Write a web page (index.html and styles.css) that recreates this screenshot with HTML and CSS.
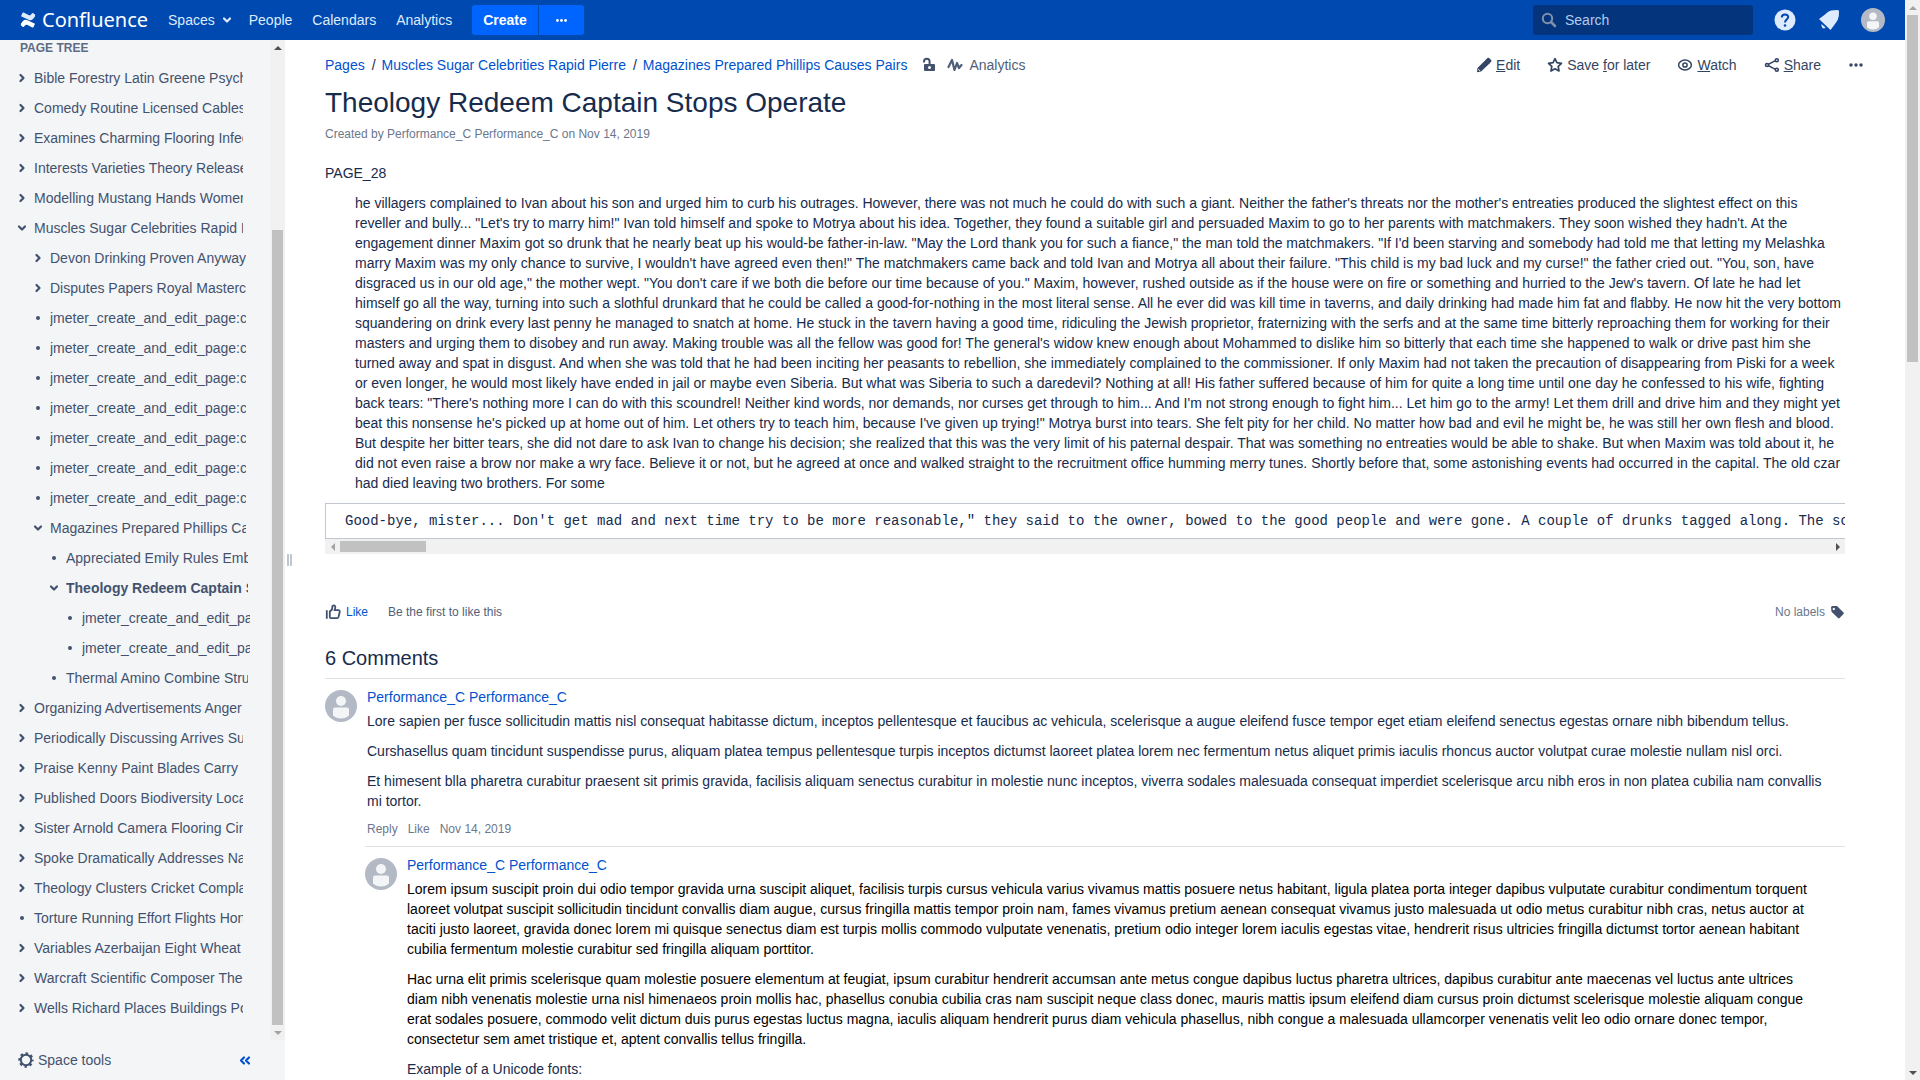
FILE: index.html
```html
<!DOCTYPE html>
<html lang="en">
<head>
<meta charset="utf-8">
<title>Theology Redeem Captain Stops Operate - Confluence</title>
<link rel="stylesheet" href="styles.css">
</head>
<body>
<svg class="sprite" aria-hidden="true">
  <symbol id="chev-right" viewBox="0 0 12 12"><path d="M4.500 3l3 3-3 3" fill="none" stroke="currentColor" stroke-width="2.200" stroke-linecap="round" stroke-linejoin="round"/></symbol>
  <symbol id="chev-down" viewBox="0 0 12 12"><path d="M3 4.500l3 3 3-3" fill="none" stroke="currentColor" stroke-width="2.200" stroke-linecap="round" stroke-linejoin="round"/></symbol>
  <symbol id="dot" viewBox="0 0 12 12"><circle cx="6" cy="6" r="2" fill="currentColor"/></symbol>
  <symbol id="more" viewBox="0 0 16 16"><circle cx="3" cy="8" r="1.700" fill="currentColor"/><circle cx="8" cy="8" r="1.700" fill="currentColor"/><circle cx="13" cy="8" r="1.700" fill="currentColor"/></symbol>
  <symbol id="avatar" viewBox="0 0 32 32"><circle cx="16" cy="16" r="16" fill="#b3bac5"/><circle cx="16" cy="11" r="5" fill="#f4f5f7"/><path d="M8 19.500q0-2 2-2h12q2 0 2 2v6q-3 3-8 3t-8-3z" fill="#f4f5f7"/></symbol>
</svg>
<div class="window">
  <div class="app">
    <header class="topbar">
      <a class="logo" href="#">
        <svg width="16" height="16" viewBox="0 0 16 16"><path d="M1 11.500l2-2.600q2-2 4.500-.700l7.500 3.600-1.600 3.400q-.3.600-1 .3L7.500 13q-1.600-.8-2.600.6L4 14.800q-.4.500-1 .2L.8 13.200z" fill="#fff"/><path d="M15 4.500l-2 2.600q-2 2-4.500.7L1 4.200 2.600.8q.3-.6 1-.3L8.500 3q1.600.8 2.600-.6L12 1.200q.4-.5 1-.2l2.200 1.800z" fill="#deebff"/></svg>
        <span>Confluence</span>
      </a>
      <nav class="mainnav">
        <a class="spaces" href="#">Spaces <svg width="12" height="12"><use href="#chev-down"/></svg></a>
        <a href="#">People</a>
        <a href="#">Calendars</a>
        <a href="#">Analytics</a>
      </nav>
      <div class="create">
        <button type="button">Create</button>
        <button type="button" aria-label="Create from template"><svg width="13" height="13"><use href="#more"/></svg></button>
      </div>
      <div class="tools">
        <label class="search">
          <svg width="16" height="16" viewBox="0 0 16 16"><circle cx="6.500" cy="6.500" r="4.700" fill="none" stroke="currentColor" stroke-width="2"/><path d="M10 10l4 4" stroke="currentColor" stroke-width="2.500" stroke-linecap="round"/></svg>
          <input type="text" placeholder="Search" aria-label="Search">
        </label>
        <a href="#" aria-label="Help"><svg width="24" height="24" viewBox="0 0 24 24"><circle cx="12" cy="12" r="10.500" fill="#deebff"/><path d="M8.800 9.500c0-4 6.400-4 6.400-.4 0 2.400-3.200 2.600-3.200 5.400" fill="none" stroke="#0049b0" stroke-width="2"/><circle cx="12" cy="17.500" r="1.300" fill="#0049b0"/></svg></a>
        <a href="#" aria-label="Notifications"><svg width="24" height="24" viewBox="0 0 24 24"><path d="M2 11L8 6.500Q12 2 17 2.200L21 2l1 1-.2 5q-.3 4-3.800 8l-4.500 6z" fill="#deebff"/><path d="M4.500 16l4 3.500q-1.500 1.500-3 .5-1.600-1.400-1-4z" fill="#deebff"/></svg></a>
        <a href="#" aria-label="Profile"><svg width="24" height="24"><use href="#avatar"/></svg></a>
      </div>
    </header>
    <div class="body">
      <aside class="sidebar">
        <div class="scroller">
          <div class="treewrap">
            <h2 class="treetitle">PAGE TREE</h2>
            <ul class="tree">
              <li><div class="row"><svg class="tw"><use href="#chev-right"/></svg><a href="#">Bible Forestry Latin Greene Psychology</a></div></li>
              <li><div class="row"><svg class="tw"><use href="#chev-right"/></svg><a href="#">Comedy Routine Licensed Cables Form</a></div></li>
              <li><div class="row"><svg class="tw"><use href="#chev-right"/></svg><a href="#">Examines Charming Flooring Infections</a></div></li>
              <li><div class="row"><svg class="tw"><use href="#chev-right"/></svg><a href="#">Interests Varieties Theory Released</a></div></li>
              <li><div class="row"><svg class="tw"><use href="#chev-right"/></svg><a href="#">Modelling Mustang Hands Women</a></div></li>
              <li><div class="row"><svg class="tw"><use href="#chev-down"/></svg><a href="#">Muscles Sugar Celebrities Rapid Pierre</a></div>
                <ul class="level1">
                  <li><div class="row"><svg class="tw"><use href="#chev-right"/></svg><a href="#">Devon Drinking Proven Anyway</a></div></li>
                  <li><div class="row"><svg class="tw"><use href="#chev-right"/></svg><a href="#">Disputes Papers Royal Mastercard</a></div></li>
                  <li><div class="row"><svg class="tw"><use href="#dot"/></svg><a href="#">jmeter_create_and_edit_page:create</a></div></li>
                  <li><div class="row"><svg class="tw"><use href="#dot"/></svg><a href="#">jmeter_create_and_edit_page:create</a></div></li>
                  <li><div class="row"><svg class="tw"><use href="#dot"/></svg><a href="#">jmeter_create_and_edit_page:create</a></div></li>
                  <li><div class="row"><svg class="tw"><use href="#dot"/></svg><a href="#">jmeter_create_and_edit_page:create</a></div></li>
                  <li><div class="row"><svg class="tw"><use href="#dot"/></svg><a href="#">jmeter_create_and_edit_page:create</a></div></li>
                  <li><div class="row"><svg class="tw"><use href="#dot"/></svg><a href="#">jmeter_create_and_edit_page:create</a></div></li>
                  <li><div class="row"><svg class="tw"><use href="#dot"/></svg><a href="#">jmeter_create_and_edit_page:create</a></div></li>
                  <li><div class="row"><svg class="tw"><use href="#chev-down"/></svg><a href="#">Magazines Prepared Phillips Causes Pairs</a></div>
                    <ul class="level2">
                      <li><div class="row"><svg class="tw"><use href="#dot"/></svg><a href="#">Appreciated Emily Rules Embedded</a></div></li>
                      <li><div class="row current"><svg class="tw"><use href="#chev-down"/></svg><a href="#">Theology Redeem Captain Stops Operate</a></div>
                        <ul class="level3">
                          <li><div class="row"><svg class="tw"><use href="#dot"/></svg><a href="#">jmeter_create_and_edit_page:create</a></div></li>
                          <li><div class="row"><svg class="tw"><use href="#dot"/></svg><a href="#">jmeter_create_and_edit_page:create</a></div></li>
                        </ul>
                      </li>
                      <li><div class="row"><svg class="tw"><use href="#dot"/></svg><a href="#">Thermal Amino Combine Structure</a></div></li>
                    </ul>
                  </li>
                </ul>
              </li>
              <li><div class="row"><svg class="tw"><use href="#chev-right"/></svg><a href="#">Organizing Advertisements Anger</a></div></li>
              <li><div class="row"><svg class="tw"><use href="#chev-right"/></svg><a href="#">Periodically Discussing Arrives Sunday</a></div></li>
              <li><div class="row"><svg class="tw"><use href="#chev-right"/></svg><a href="#">Praise Kenny Paint Blades Carry</a></div></li>
              <li><div class="row"><svg class="tw"><use href="#chev-right"/></svg><a href="#">Published Doors Biodiversity Location</a></div></li>
              <li><div class="row"><svg class="tw"><use href="#chev-right"/></svg><a href="#">Sister Arnold Camera Flooring Circle</a></div></li>
              <li><div class="row"><svg class="tw"><use href="#chev-right"/></svg><a href="#">Spoke Dramatically Addresses Name</a></div></li>
              <li><div class="row"><svg class="tw"><use href="#chev-right"/></svg><a href="#">Theology Clusters Cricket Complaint</a></div></li>
              <li><div class="row"><svg class="tw"><use href="#dot"/></svg><a href="#">Torture Running Effort Flights Honda</a></div></li>
              <li><div class="row"><svg class="tw"><use href="#chev-right"/></svg><a href="#">Variables Azerbaijan Eight Wheat</a></div></li>
              <li><div class="row"><svg class="tw"><use href="#chev-right"/></svg><a href="#">Warcraft Scientific Composer The</a></div></li>
              <li><div class="row"><svg class="tw"><use href="#chev-right"/></svg><a href="#">Wells Richard Places Buildings Pocket</a></div></li>
            </ul>
          </div>
          <div class="vbar" aria-hidden="true"><i class="arrow up on"></i><div class="track side"><b></b></div><i class="arrow down"></i></div>
        </div>
        <div class="sidefoot">
          <button type="button" class="spacetools"><svg width="16" height="16" viewBox="0 0 16 16"><circle cx="8" cy="8" r="5.200" fill="none" stroke="currentColor" stroke-width="2"/><circle cx="8" cy="8" r="6.500" fill="none" stroke="currentColor" stroke-width="2.400" stroke-dasharray="2.500 2.605" stroke-dashoffset="1.250"/></svg>Space tools</button>
          <button type="button" class="collapse" aria-label="Collapse sidebar"><svg width="12" height="12" viewBox="0 0 12 12"><path d="M5 3.500L2 6.500l3 3M10 3.500L7 6.500l3 3" fill="none" stroke="currentColor" stroke-width="2.200" stroke-linecap="round" stroke-linejoin="round"/></svg></button>
        </div>
      </aside>
      <div class="grip" aria-hidden="true"><i></i><i></i></div>
      <main class="content">
        <div class="pagebar">
          <nav class="crumbs">
            <a href="#">Pages</a><span>/</span><a href="#">Muscles Sugar Celebrities Rapid Pierre</a><span>/</span><a href="#">Magazines Prepared Phillips Causes Pairs</a>
            <a class="lock" href="#" aria-label="Unrestricted"><svg width="16" height="16" viewBox="0 0 16 16"><path d="M3 5.500V4.500a2.800 2.800 0 0 1 5.600 0V8" fill="none" stroke="currentColor" stroke-width="2"/><path d="M4 7h9q1 0 1 1v5q0 1-1 1H4q-1 0-1-1V8q0-1 1-1z" fill="currentColor"/><circle cx="8.500" cy="10.500" r="1.500" fill="#fff"/></svg></a>
            <a class="stats" href="#"><svg width="16" height="16" viewBox="0 0 16 16"><path d="M1.500 10L5 3l2.500 10L10 6l2 5 2.500-3" fill="none" stroke="currentColor" stroke-width="2.200" stroke-linecap="round" stroke-linejoin="round"/></svg>Analytics</a>
          </nav>
          <div class="actions">
            <a href="#"><svg width="16" height="16" viewBox="0 0 16 16"><path d="M1.500 11L9.800 2.700l3.700 3.700L5 14.500l-4 .8z" fill="currentColor"/><path d="M9.500 3l2-2q.8-.6 1.600.1l2 2q.7.800 0 1.600l-2 2z" fill="currentColor"/><path d="M2.300 12.200l1.700 1.700" stroke="#fff"/></svg><span><u>E</u>dit</span></a>
            <a href="#"><svg width="16" height="16" viewBox="0 0 16 16"><path d="M8 1.700l1.900 4 4.600.6-3.300 3.100.8 4.600-4-2.200L4 14l.8-4.600L1.500 6.300l4.600-.6z" fill="none" stroke="currentColor" stroke-width="1.700" stroke-linejoin="round"/></svg><span>Save <u>f</u>or later</span></a>
            <a href="#"><svg width="16" height="16" viewBox="0 0 16 16"><ellipse cx="8" cy="8" rx="6.400" ry="4.900" fill="none" stroke="currentColor" stroke-width="1.500"/><circle cx="8" cy="8" r="2.100" fill="none" stroke="currentColor" stroke-width="1.500"/></svg><span><u>W</u>atch</span></a>
            <a href="#"><svg width="16" height="16" viewBox="0 0 16 16"><path d="M12.500 3.200L3 8l9.500 4.800" fill="none" stroke="currentColor" stroke-width="1.500"/><g fill="#fff" stroke="currentColor" stroke-width="1.600"><circle cx="12.800" cy="3.200" r="1.500"/><circle cx="3" cy="8" r="1.500"/><circle cx="12.800" cy="12.800" r="1.500"/></g></svg><span><u>S</u>hare</span></a>
            <a href="#" aria-label="More"><svg width="16" height="16"><use href="#more"/></svg></a>
          </div>
        </div>
        <h1>Theology Redeem Captain Stops Operate</h1>
        <p class="byline">Created by Performance_C Performance_C on Nov 14, 2019</p>
        <article class="wiki">
          <p>PAGE_28</p>
          <p class="indent">he villagers complained to Ivan about his son and urged him to curb his outrages. However, there was not much he could do with such a giant. Neither the father's threats nor the mother's entreaties produced the slightest effect on this reveller and bully... "Let's try to marry him!" Ivan told himself and spoke to Motrya about his idea. Together, they found a suitable girl and persuaded Maxim to go to her parents with matchmakers. They soon wished they hadn't. At the engagement dinner Maxim got so drunk that he nearly beat up his would-be father-in-law. "May the Lord thank you for such a fiance," the man told the matchmakers. "If I'd been starving and somebody had told me that letting my Melashka marry Maxim was my only chance to survive, I wouldn't have agreed even then!" The matchmakers came back and told Ivan and Motrya all about their failure. "This child is my bad luck and my curse!" the father cried out. "You, son, have disgraced us in our old age," the mother wept. "You don't care if we both die before our time because of you." Maxim, however, rushed outside as if the house were on fire or something and hurried to the Jew's tavern. Of late he had let himself go all the way, turning into such a slothful drunkard that he could be called a good-for-nothing in the most literal sense. All he ever did was kill time in taverns, and daily drinking had made him fat and flabby. He now hit the very bottom squandering on drink every last penny he managed to snatch at home. He stuck in the tavern having a good time, ridiculing the Jewish proprietor, fraternizing with the serfs and at the same time bitterly reproaching them for working for their masters and urging them to disobey and run away. Making trouble was all the fellow was good for! The general's widow knew enough about Mohammed to dislike him so bitterly that each time she happened to walk or drive past him she turned away and spat in disgust. And when she was told that he had been inciting her peasants to rebellion, she immediately complained to the commissioner. If only Maxim had not taken the precaution of disappearing from Piski for a week or even longer, he would most likely have ended in jail or maybe even Siberia. But what was Siberia to such a daredevil? Nothing at all! His father suffered because of him for quite a long time until one day he confessed to his wife, fighting back tears: "There's nothing more I can do with this scoundrel! Neither kind words, nor demands, nor curses get through to him... And I'm not strong enough to fight him... Let him go to the army! Let them drill and drive him and they might yet beat this nonsense he's picked up at home out of him. Let others try to teach him, because I've given up trying!" Motrya burst into tears. She felt pity for her child. No matter how bad and evil he might be, he was still her own flesh and blood. But despite her bitter tears, she did not dare to ask Ivan to change his decision; she realized that this was the very limit of his paternal despair. That was something no entreaties would be able to shake. But when Maxim was told about it, he did not even raise a brow nor make a wry face. Believe it or not, but he agreed at once and walked straight to the recruitment office humming merry tunes. Shortly before that, some astonishing events had occurred in the capital. The old czar had died leaving two brothers. For some</p>
          <div class="codebox">
            <pre>Good-bye, mister... Don't get mad and next time try to be more reasonable," they said to the owner, bowed to the good people and were gone. A couple of drunks tagged along. The sound</pre>
            <div class="hbar" aria-hidden="true"><i class="arrow left"></i><div class="track code"><b></b></div><i class="arrow right on"></i></div>
          </div>
        </article>
        <div class="likes">
          <a href="#"><svg width="16" height="16" viewBox="0 0 16 16"><path d="M1.800 7v7" fill="none" stroke="#42526e" stroke-width="1.800" stroke-linecap="round"/><path d="M4.800 7.500L7 5.500 7.500 2q1.800-1.400 2.700.5.400 1.500-.7 3.700h4.200q1.300.3 1 1.800l-1.200 5q-.4 1.200-1.500 1.200H6q-1.200 0-1.200-1.200z" fill="none" stroke="#42526e" stroke-width="1.800" stroke-linejoin="round"/></svg>Like</a>
          <span class="first">Be the first to like this</span>
          <span class="labels">No labels<svg width="16" height="16" viewBox="0 0 16 16"><path fill-rule="evenodd" d="M2 3.500Q2 2 3.500 2H8l6.500 6.500q.8.800 0 1.600L10.600 14q-.8.800-1.600 0L2.500 7.800zM4.800 3.800a1.200 1.200 0 1 0 .01 0z" fill="#42526e"/></svg></span>
        </div>
        <section>
          <h2 class="ctitle">6 Comments</h2>
          <div class="comment">
            <svg class="face"><use href="#avatar"/></svg>
            <div class="ctext">
              <a class="author" href="#">Performance_C Performance_C</a>
              <p>Lore sapien per fusce sollicitudin mattis nisl consequat habitasse dictum, inceptos pellentesque et faucibus ac vehicula, scelerisque a augue eleifend fusce tempor eget etiam eleifend senectus egestas ornare nibh bibendum tellus.</p>
              <p>Curshasellus quam tincidunt suspendisse purus, aliquam platea tempus pellentesque turpis inceptos dictumst laoreet platea lorem nec fermentum netus aliquet primis iaculis rhoncus auctor volutpat curae molestie nullam nisl orci.</p>
              <p>Et himesent blla pharetra curabitur praesent sit primis gravida, facilisis aliquam senectus curabitur in molestie nunc inceptos, viverra sodales malesuada consequat imperdiet scelerisque arcu nibh eros in non platea cubilia nam convallis mi tortor.</p>
              <div class="cmeta"><a href="#">Reply</a><a href="#">Like</a><a href="#">Nov 14, 2019</a></div>
            </div>
          </div>
          <div class="comment reply">
            <svg class="face"><use href="#avatar"/></svg>
            <div class="ctext">
              <a class="author" href="#">Performance_C Performance_C</a>
              <p class="black">Lorem ipsum suscipit proin dui odio tempor gravida urna suscipit aliquet, facilisis turpis cursus vehicula varius vivamus mattis posuere netus habitant, ligula platea porta integer dapibus vulputate curabitur condimentum torquent laoreet volutpat suscipit sollicitudin tincidunt convallis diam augue, cursus fringilla mattis tempor proin nam, fames vivamus pretium aenean consequat vivamus justo malesuada ut odio metus curabitur nibh cras, netus auctor at taciti justo laoreet, gravida donec lorem mi quisque senectus diam est turpis mollis commodo vulputate venenatis, pretium odio integer lorem iaculis egestas vitae, hendrerit risus ultricies fringilla dictumst tortor aenean habitant cubilia fermentum molestie curabitur sed fringilla aliquam porttitor.</p>
              <p class="black">Hac urna elit primis scelerisque quam molestie posuere elementum at feugiat, ipsum curabitur hendrerit accumsan ante metus congue dapibus luctus pharetra ultrices, dapibus curabitur ante maecenas vel luctus ante ultrices diam nibh venenatis molestie urna nisl himenaeos proin mollis hac, phasellus conubia cubilia cras nam suscipit neque class donec, mauris mattis ipsum eleifend diam cursus proin dictumst scelerisque molestie aliquam congue erat sodales posuere, commodo velit dictum duis purus egestas luctus magna, iaculis aliquam hendrerit purus diam vehicula phasellus, nibh congue a malesuada ullamcorper venenatis velit leo odio ornare donec tempor, consectetur sem amet tristique et, aptent convallis tellus fringilla.</p>
              <p>Example of a Unicode fonts:</p>
            </div>
          </div>
        </section>
      </main>
    </div>
  </div>
  <div class="vbar" aria-hidden="true"><i class="arrow up"></i><div class="track page"><b></b></div><i class="arrow down on"></i></div>
</div>
</body>
</html>
```
FILE: styles.css
```css
* { box-sizing: border-box; }
body { margin: 0; background: #fff; color: #172b4d; font: 14px/20px "Liberation Sans", Arial, sans-serif; }
a { color: #0052cc; text-decoration: none; }
button { border: 0; background: none; padding: 0; margin: 0; font: inherit; color: inherit; cursor: pointer; }
svg { display: block; flex: none; }
ul { list-style: none; margin: 0; padding: 0; }
p, h1, h2, pre { margin: 0; }
.sprite { position: absolute; width: 0; height: 0; }

.window { display: flex; height: 100vh; overflow: hidden; }
.app { flex: 1; min-width: 0; display: flex; flex-direction: column; }
.body { flex: 1; min-height: 0; display: flex; overflow: hidden; }

/* top bar */
.topbar { flex: none; display: flex; align-items: center; height: 40px; padding: 0 20px; background: #0049b0; color: #deebff; }
.topbar a { color: #deebff; }
.topbar .logo { display: flex; align-items: center; gap: 6px; color: #fff; font: 20px/24px "Noto Sans", sans-serif; }
.mainnav { display: flex; gap: 20px; margin-left: 20px; }
.mainnav a { display: flex; align-items: center; gap: 6px; }
.mainnav .spaces { margin-right: -4px; }
.create { display: flex; gap: 1px; margin-left: 20px; }
.create button { display: flex; align-items: center; height: 30px; padding: 0 11px; background: #0065ff; color: #fff; font-weight: bold; border-radius: 3px 0 0 3px; }
.create button + button { padding: 0 16px; border-radius: 0 3px 3px 0; }
.tools { display: flex; align-items: center; gap: 20px; margin-left: auto; }
.search { display: flex; align-items: center; gap: 8px; width: 220px; height: 30px; padding: 0 8px; border-radius: 3px; background: #04357c; color: #8090ab; }
.search input { flex: 1; min-width: 0; border: 0; padding: 0; background: none; font: inherit; color: #deebff; }
.search input::placeholder { color: #b3cbee; opacity: 1; }

/* sidebar */
.sidebar { flex: none; display: flex; flex-direction: column; width: 285px; background: #f4f5f7; color: #42526e; }
.scroller { flex: 1; min-height: 0; display: flex; overflow: hidden; }
.treewrap { flex: 1; min-width: 0; overflow: hidden; padding-left: 16px; }
.treetitle { padding-left: 4px; margin-bottom: 7px; font-size: 12px; line-height: 16px; color: #5e6c84; }
.tree { padding-right: 27px; }
.level1 { padding-left: 16px; margin-right: -3px; }
.level2, .level3 { padding-left: 16px; margin-right: -2px; }
.row { display: flex; align-items: center; gap: 6px; height: 30px; overflow: hidden; }
.row a { flex: 1; min-width: 0; overflow: hidden; white-space: nowrap; color: #42526e; }
.row.current { font-weight: bold; }
.tw { width: 12px; height: 12px; }
.sidefoot { flex: none; display: flex; align-items: center; justify-content: space-between; height: 40px; padding: 0 34px 0 18px; }
.spacetools { display: flex; align-items: center; gap: 4px; }
.collapse { color: #0052cc; }
.grip { flex: none; display: flex; align-items: center; gap: 1px; width: 10px; padding-left: 2px; }
.grip i { width: 2px; height: 12px; background: #c1c7d0; }

/* scroll bars */
.vbar, .hbar { flex: none; display: flex; background: #f1f1f1; }
.vbar { flex-direction: column; width: 15px; }
.hbar { height: 15px; }
.track { flex: 1; display: flex; min-width: 0; min-height: 0; }
.track b { background: #c1c1c1; }
.vbar .track { flex-direction: column; padding: 0 2px; }
.hbar .track { padding: 2px 0; }
.side { justify-content: flex-end; }
.side b { height: 82%; }
.page b { height: 33%; }
.code b { width: 86px; }
.arrow { flex: none; width: 15px; height: 15px; color: #a3a3a3; display: flex; align-items: center; justify-content: center; }
.arrow.on { color: #505050; }
.arrow::before { content: ""; border: 4px solid transparent; }
.up::before { border-top-width: 0; border-bottom-color: currentColor; }
.down::before { border-bottom-width: 0; border-top-color: currentColor; }
.left::before { border-left-width: 0; border-right-color: currentColor; }
.right::before { border-right-width: 0; border-left-color: currentColor; }

/* page */
.content { flex: 1; min-width: 0; padding: 15px 60px 0 30px; }
.pagebar { display: flex; justify-content: space-between; margin-right: -19px; }
.crumbs, .crumbs .stats { display: flex; align-items: center; }
.crumbs > span { padding: 0 6px 0 7px; }
.crumbs .lock { margin-left: 14px; color: #42526e; }
.crumbs .stats { gap: 6px; margin-left: 10px; color: #505f79; }
.actions { display: flex; gap: 27px; }
.actions a { display: flex; align-items: center; gap: 4px; color: #344563; }
h1 { margin-top: 12px; font-size: 28px; line-height: 32px; font-weight: normal; }
.byline { margin-top: 5px; font-size: 12px; color: #6b778c; }
.wiki { margin-top: 19px; }
.indent { margin: 10px 0 10px 30px; }
.codebox { overflow: hidden; }
.codebox pre { height: 36px; padding: 7px 19px; border: 1px solid #c1c7d0; border-right: 0; overflow: hidden; font: 14px/20px "Liberation Mono", monospace; }
.likes { display: flex; align-items: center; margin-top: 48px; font-size: 12px; }
.likes a { display: flex; align-items: center; gap: 5px; }
.first { margin-left: 20px; color: #505f79; }
.labels { display: flex; align-items: center; gap: 4px; margin-left: auto; color: #6b778c; }
.ctitle { padding: 24px 0 8px; font-size: 20px; line-height: 24px; font-weight: normal; }
.comment { display: flex; gap: 10px; padding: 8px 20px 7px 0; border-top: 1px solid #dfe1e6; }
.reply { margin-left: 40px; }
.face { width: 32px; height: 32px; margin-top: 3px; }
.ctext { flex: 1; min-width: 0; }
.author { display: block; margin-bottom: 4px; }
.ctext p + p { margin-top: 10px; }
.black { color: #000; }
.cmeta { display: flex; gap: 10px; margin-top: 8px; font-size: 12px; }
.cmeta a { color: #6b778c; }
```
